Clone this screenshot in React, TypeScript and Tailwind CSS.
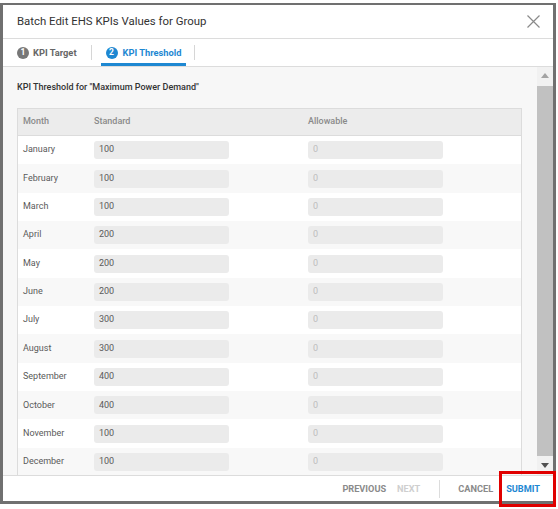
const months = [
  ["January", "100"],
  ["February", "100"],
  ["March", "100"],
  ["April", "200"],
  ["May", "200"],
  ["June", "200"],
  ["July", "300"],
  ["August", "300"],
  ["September", "400"],
  ["October", "400"],
  ["November", "100"],
  ["December", "100"],
];

export default function App() {
  return (
    <div className="w-[558px] h-[509px] bg-white pt-[3px] font-['Roboto',sans-serif]">
      <div className="w-[556px] h-[501px] border-[3px] border-t-2 border-[#707070] bg-white flex flex-col relative">
        {/* Header */}
        <div className="h-[34px] flex-shrink-0 flex items-center justify-between pl-[14px] pr-[13px] border-b border-[#dcdcdc]">
          <h1 className="text-[11.4px] text-[#333] pt-[1px]">Batch Edit EHS KPIs Values for Group</h1>
          <svg width="13" height="13" viewBox="0 0 13 13">
            <path d="M0.5 0.5 L12.5 12.5 M12.5 0.5 L0.5 12.5" stroke="#8a8a8a" strokeWidth="1.2" />
          </svg>
        </div>

        {/* Tabs */}
        <div className="h-[28px] flex-shrink-0 flex items-stretch pl-[14px] border-b border-[#dcdcdc]">
          <div className="flex items-center gap-[4px] pr-[14px]">
            <span className="w-[12px] h-[12px] rounded-full bg-[#777] text-white text-[8.5px] font-bold flex items-center justify-center">1</span>
            <span className="text-[9.3px] font-bold text-[#666]">KPI Target</span>
          </div>
          <div className="w-px h-[15px] bg-[#d6d6d6] self-center" />
          <div className="flex items-center gap-[5px] ml-[9px] px-[5px] border-b-[3px] border-[#1e88d2] pt-[3px]">
            <span className="w-[12px] h-[12px] rounded-full bg-[#1e88d2] text-white text-[8.5px] font-bold flex items-center justify-center">2</span>
            <span className="text-[9.3px] font-bold text-[#1e88d2]">KPI Threshold</span>
          </div>
          <div className="w-px h-[15px] bg-[#d6d6d6] self-center ml-[8px]" />
        </div>

        {/* Content */}
        <div className="h-[408px] flex-shrink-0 flex bg-[#f7f7f7] overflow-hidden">
          <div className="flex-1 pl-[14px] pr-[15px]">
            <div className="h-[41px] flex items-center pt-[1px] text-[9px] font-medium text-[#333]">
              KPI Threshold for "Maximum Power Demand"
            </div>
            <div className="bg-white border-x border-t border-[#dcdcdc] w-[505px]">
              <div className="h-[27px] flex items-center bg-[#ececec] border-b border-[#dcdcdc] text-[9px] font-medium text-[#8a8a8a]">
                <div className="w-[71px] pl-[5px]">Month</div>
                <div className="w-[214px] pl-[5px]">Standard</div>
                <div className="pl-[5px]">Allowable</div>
              </div>
              {months.map(([m, v], i) => (
                <div key={m} className={`h-[28.35px] flex items-center text-[9px] ${i % 2 === 1 ? "bg-[#f8f8f8]" : "bg-white"}`}>
                  <div className="w-[71px] pl-[5px] text-[#5a5a5a]">{m}</div>
                  <div className="w-[214px] pl-[5px]">
                    <div className="w-[135px] h-[18px] rounded-[3px] bg-[#ebebeb] flex items-center pl-[5px] text-[#5a5a5a]">{v}</div>
                  </div>
                  <div className="pl-[5px]">
                    <div className="w-[135px] h-[18px] rounded-[3px] bg-[#ebebeb] flex items-center pl-[5px] text-[#bdbdbd]">0</div>
                  </div>
                </div>
              ))}
            </div>
          </div>
          {/* Scrollbar */}
          <div className="w-[16px] flex-shrink-0 bg-[#f1f1f1] flex flex-col items-center">
            <div className="h-[17px] flex items-center justify-center">
              <svg width="8" height="5" viewBox="0 0 8 5"><path d="M0 5 L4 0 L8 5 Z" fill="#a3a3a3" /></svg>
            </div>
            <div className="w-[16px] flex-1 bg-[#c1c1c1] my-[2px]" />
            <div className="h-[17px] flex items-start pt-[5px] justify-center">
              <svg width="8" height="5" viewBox="0 0 8 5"><path d="M0 0 L4 5 L8 0 Z" fill="#505050" /></svg>
            </div>
          </div>
        </div>

        {/* Footer */}
        <div className="flex-1 border-t border-[#dcdcdc] flex items-center justify-end pr-[13px] pt-[1px] text-[9.2px] font-bold">
          <span className="text-[#8a8a8a]">PREVIOUS</span>
          <span className="text-[#cfcfcf] ml-[11px]">NEXT</span>
          <div className="w-px h-[18px] bg-[#dcdcdc] ml-[19px]" />
          <span className="text-[#8a8a8a] ml-[18px]">CANCEL</span>
          <span className="text-[#1e88d2] ml-[13px]">SUBMIT</span>
        </div>
        <div className="absolute right-[-3px] bottom-[-6px] w-[57px] h-[36px] border-[3px] border-[#e00000]" />
      </div>
    </div>
  );
}
